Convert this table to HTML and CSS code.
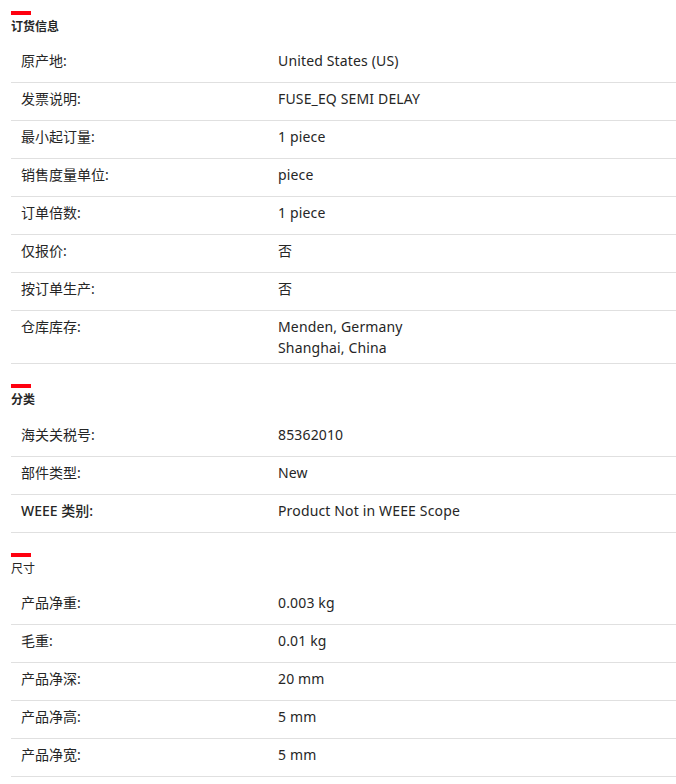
FILE: index.html
```html
<!DOCTYPE html>
<html lang="zh">
<head>
<meta charset="utf-8">
<link rel="stylesheet" href="styles.css">
</head>
<body>
<div class="page">
  <section class="section">
    <div class="bar"></div>
    <h2 class="title">订货信息</h2>
    <div class="rows">
      <div class="row"><div class="label">原产地:</div><div class="value">United States (US)</div></div>
      <div class="row"><div class="label">发票说明:</div><div class="value">FUSE_EQ SEMI DELAY</div></div>
      <div class="row"><div class="label">最小起订量:</div><div class="value">1 piece</div></div>
      <div class="row"><div class="label">销售度量单位:</div><div class="value">piece</div></div>
      <div class="row"><div class="label">订单倍数:</div><div class="value">1 piece</div></div>
      <div class="row"><div class="label">仅报价:</div><div class="value">否</div></div>
      <div class="row"><div class="label">按订单生产:</div><div class="value">否</div></div>
      <div class="row"><div class="label">仓库库存:</div><div class="value">Menden, Germany<br>Shanghai, China</div></div>
    </div>
  </section>
  <section class="section">
    <div class="bar"></div>
    <h2 class="title title-tall">分类</h2>
    <div class="rows">
      <div class="row"><div class="label">海关关税号:</div><div class="value">85362010</div></div>
      <div class="row"><div class="label">部件类型:</div><div class="value">New</div></div>
      <div class="row"><div class="label label-strong">WEEE 类别:</div><div class="value">Product Not in WEEE Scope</div></div>
    </div>
  </section>
  <section class="section">
    <div class="bar"></div>
    <h2 class="title title-light">尺寸</h2>
    <div class="rows">
      <div class="row"><div class="label">产品净重:</div><div class="value">0.003 kg</div></div>
      <div class="row"><div class="label">毛重:</div><div class="value">0.01 kg</div></div>
      <div class="row"><div class="label">产品净深:</div><div class="value">20 mm</div></div>
      <div class="row"><div class="label">产品净高:</div><div class="value">5 mm</div></div>
      <div class="row"><div class="label">产品净宽:</div><div class="value">5 mm</div></div>
    </div>
  </section>
</div>
</body>
</html>
```
FILE: styles.css
```css
* { box-sizing: border-box; }
html, body { margin: 0; padding: 0; background: #fff; }
body {
  font-family: "Noto Sans", "Noto Sans CJK SC", sans-serif;
  color: #262626;
  font-size: 14px;
}
.page {
  padding: 11px 0 0 11px;
  width: 676px;
}
.section { margin-bottom: 20px; }
.bar {
  width: 20px;
  height: 4px;
  background: #ff000f;
}
.title {
  margin: 4px 0 10px 0;
  font-size: 12px;
  line-height: 16px;
  font-weight: 700;
}
.title-tall { margin-bottom: 11px; }
.title-light { font-weight: 400; }
.row {
  display: grid;
  grid-template-columns: 267px 1fr;
  min-height: 38px;
  padding: 5px 0;
  border-bottom: 1px solid #e0e0e0;
  line-height: 21px;
}
.label { padding-left: 10px; }
.value { letter-spacing: 0.15px; }
.label-strong { font-weight: 500; }
```
